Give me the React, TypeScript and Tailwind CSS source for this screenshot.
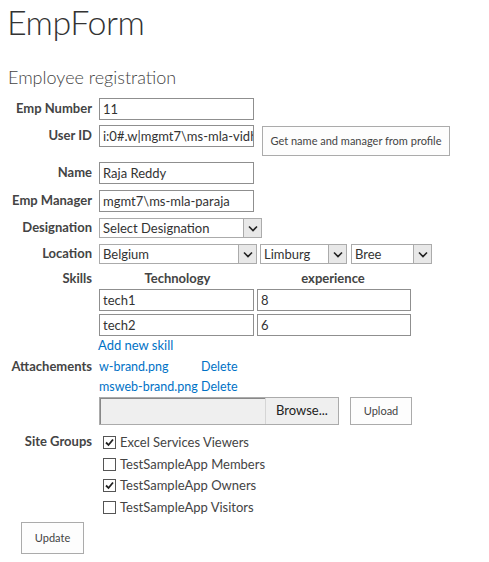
import React from "react";

const font = { fontFamily: 'Lato, "Open Sans", sans-serif' };

function Chevron() {
  return (
    <svg width="10" height="7" viewBox="0 0 10 7" fill="none">
      <path d="M1 1.5 L5 5.5 L9 1.5" stroke="#222" strokeWidth="1.6" />
    </svg>
  );
}

function Select({ value, w }: { value: string; w: string }) {
  return (
    <div className={`flex h-[20px] ${w} border border-[#ababab] bg-white`}>
      <div className="flex-1 pl-[3px] text-[13px] leading-[18px] text-[#333] overflow-hidden whitespace-nowrap">{value}</div>
      <div className="flex w-[18px] items-center justify-center border-l border-[#ababab] bg-[#e8e8e8]">
        <Chevron />
      </div>
    </div>
  );
}

function Input({ value, w = "w-[155px]" }: { value: string; w?: string }) {
  return (
    <div className={`h-[22px] ${w} border border-[#8f8f8f] bg-white pl-[3px] text-[13px] leading-[20px] text-[#333] overflow-hidden whitespace-nowrap`}>
      {value}
    </div>
  );
}

function Label({ children }: { children: React.ReactNode }) {
  return (
    <div className="w-[92px] shrink-0 text-right text-[13px] font-bold text-[#444] whitespace-nowrap">{children}</div>
  );
}

function Check({ checked }: { checked: boolean }) {
  return (
    <div className="flex h-[13px] w-[13px] items-center justify-center border border-[#555] bg-white">
      {checked && (
        <svg width="11" height="11" viewBox="0 0 11 11" fill="none">
          <path d="M2 5.5 L4.5 8 L9 2.5" stroke="#222" strokeWidth="1.8" />
        </svg>
      )}
    </div>
  );
}

export default function App() {
  const groups = [
    { name: "Excel Services Viewers", checked: true },
    { name: "TestSampleApp Members", checked: false },
    { name: "TestSampleApp Owners", checked: true },
    { name: "TestSampleApp Visitors", checked: false },
  ];
  return (
    <div style={font} className="w-[489px] h-[562px] bg-white text-[#444] overflow-hidden">
      <div className="pl-[7px] pt-[1px] text-[34px] font-light leading-[42px] tracking-[-0.5px] text-[#333]">EmpForm</div>
      <div className="pl-[8px] mt-[22px] text-[18px] font-light leading-[24px] text-[#444]">Employee registration</div>

      <div className="mt-[9px] flex items-center h-[22px]">
        <Label>Emp Number</Label>
        <div className="ml-[7px]"><Input value="11" /></div>
      </div>

      <div className="mt-[5px] flex items-start h-[37px]">
        <div className="flex h-[22px] items-center"><Label>User ID</Label></div>
        <div className="ml-[7px]"><Input value="i:0#.w|mgmt7\ms-mla-vidhk" /></div>
        <div className="ml-[8px] mt-[1px] flex h-[30px] w-[188px] items-center justify-center border border-[#ababab] bg-[#fdfdfd] text-[11px] text-[#444]">
          Get name and manager from profile
        </div>
      </div>

      <div className="flex items-center h-[22px]">
        <Label>Name</Label>
        <div className="ml-[7px]"><Input value="Raja Reddy" /></div>
      </div>

      <div className="mt-[6px] flex items-center h-[22px]">
        <Label>Emp Manager</Label>
        <div className="ml-[7px]"><Input value="mgmt7\ms-mla-paraja" /></div>
      </div>

      <div className="mt-[6px] flex items-center h-[20px]">
        <Label>Designation</Label>
        <div className="ml-[7px]"><Select value="Select Designation" w="w-[163px]" /></div>
      </div>

      <div className="mt-[6px] flex items-center h-[20px]">
        <Label>Location</Label>
        <div className="ml-[7px]"><Select value="Belgium" w="w-[158px]" /></div>
        <div className="ml-[3px]"><Select value="Limburg" w="w-[87px]" /></div>
        <div className="ml-[4px]"><Select value="Bree" w="w-[81px]" /></div>
      </div>

      <div className="mt-[5px] flex items-center h-[20px]">
        <Label>Skills</Label>
        <div className="ml-[7px] flex text-[13px] font-bold text-[#444]">
          <div className="w-[157px] text-center">Technology</div>
          <div className="w-[154px] text-center">experience</div>
        </div>
      </div>

      <div className="ml-[99px] flex gap-[3px]">
        <Input value="tech1" />
        <Input value="8" w="w-[154px]" />
      </div>
      <div className="mt-[3px] ml-[99px] flex gap-[3px]">
        <Input value="tech2" />
        <Input value="6" w="w-[154px]" />
      </div>
      <div className="ml-[98px] mt-[1px] h-[16px] text-[13px] leading-[16px] text-[#0072c6]">Add new skill</div>

      <div className="mt-[4px] flex items-center h-[20px]">
        <Label>Attachements</Label>
        <div className="ml-[7px] flex text-[12.5px] text-[#0072c6]">
          <div className="w-[102px]">w-brand.png</div>
          <div>Delete</div>
        </div>
      </div>
      <div className="flex items-center h-[20px] ml-[99px] text-[12.5px] text-[#0072c6]">
        <div className="w-[102px] whitespace-nowrap">msweb-brand.png</div>
        <div>Delete</div>
      </div>

      <div className="ml-[99px] flex items-center">
        <div className="flex h-[28px] w-[240px] border border-[#ababab]">
          <div className="flex-1 border-t border-l border-[#888] bg-[#efefef]" />
          <div className="flex w-[73px] items-center justify-center border-l border-[#d5d5d5] bg-[#efefef] text-[13px] text-[#222]">Browse...</div>
        </div>
        <div className="ml-[11px] flex h-[28px] w-[62px] items-center justify-center border border-[#ababab] bg-[#fdfdfd] text-[11px] text-[#444]">Upload</div>
      </div>

      <div className="mt-[7px] flex items-start">
        <div className="flex h-[20px] items-center"><Label>Site Groups</Label></div>
        <div className="ml-[11px] flex flex-col">
          {groups.map((g) => (
            <div key={g.name} className="flex h-[21.5px] items-center gap-[4px]">
              <Check checked={g.checked} />
              <span className="text-[13px] text-[#444]">{g.name}</span>
            </div>
          ))}
        </div>
      </div>

      <div className="ml-[21px] mt-[4px] flex h-[32px] w-[63px] items-center justify-center border border-[#ababab] bg-[#fdfdfd] text-[11px] text-[#444]">Update</div>
    </div>
  );
}
